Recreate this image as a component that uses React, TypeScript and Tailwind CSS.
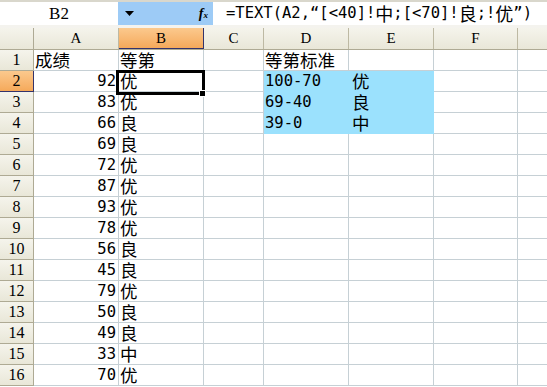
import React from 'react'

const grades = [
  [92, '优'], [83, '优'], [66, '良'], [69, '良'], [72, '优'], [87, '优'], [93, '优'], [78, '优'],
  [56, '良'], [45, '良'], [79, '优'], [50, '良'], [49, '良'], [33, '中'], [70, '优'],
] as const

const standard: Record<number, [string, string]> = {
  2: ['100-70', '优'],
  3: ['69-40', '良'],
  4: ['39-0', '中'],
}

const cjkFont = { fontFamily: '"Noto Sans CJK SC", "Noto Sans", sans-serif' }
const monoFont = { fontFamily: '"DejaVu Sans Mono", "Noto Sans CJK SC", monospace' }
const headFont = { fontFamily: '"Liberation Serif", "DejaVu Serif", serif' }

function ColHead({ label, w, active }: { label: string; w: string; active?: boolean }) {
  return (
    <div
      className={`${w} shrink-0 h-full flex items-center justify-center text-[15px] text-black border-r ${
        active
          ? 'bg-gradient-to-b from-[#fbc98d] to-[#f5a95a] border-[#34336b] border-b'
          : 'border-[#bdb9a3]'
      }`}
      style={headFont}
    >
      {label}
    </div>
  )
}

function Cell({
  w,
  children,
  align = 'left',
  fill,
  mono,
}: {
  w: string
  children?: React.ReactNode
  align?: 'left' | 'right'
  fill?: boolean
  mono?: boolean
}) {
  return (
    <div
      className={`${w} shrink-0 h-full flex items-end leading-[20px] text-black border-r border-b whitespace-nowrap ${
        mono ? 'text-[15.5px]' : 'text-[17.5px]'
      } ${align === 'right' ? 'justify-end pr-[2px]' : 'justify-start pl-[1px]'} ${
        fill ? 'bg-[#9be1fd] border-[#9be1fd]' : 'border-[#c6d0d5]'
      }`}
      style={mono ? monoFont : cjkFont}
    >
      {children}
    </div>
  )
}

const Cjk = ({ c }: { c: string }) => (
  <span className="text-[18px]" style={cjkFont}>
    {c}
  </span>
)

export default function App() {
  const rows = Array.from({ length: 16 }, (_, i) => i + 1)

  return (
    <div className="w-[547px] h-[387px] overflow-hidden bg-white select-none">
      {/* formula bar */}
      <div className="h-[25px] flex border-t-2 border-[#d9d7cc]">
        <div className="w-[118px] flex items-center justify-center text-[17px]" style={headFont}>
          B2
        </div>
        <div className="w-[95px] bg-[#9dcbf6] flex items-center justify-between pl-[7px] pr-[5px]">
          <svg width="9" height="5" viewBox="0 0 9 5">
            <path d="M0 0h9L4.5 5z" fill="#000" />
          </svg>
          <span className="italic font-bold text-[14px] leading-none" style={headFont}>
            f<span className="text-[9px]">x</span>
          </span>
        </div>
        <div className="flex-1 flex items-center pl-[13px] text-[15.5px] whitespace-nowrap" style={monoFont}>
          =TEXT(A2,“[&lt;40]!<Cjk c="中" />;[&lt;70]!<Cjk c="良" />;!<Cjk c="优" />”)
        </div>
      </div>
      <div className="h-[3px] bg-[#f4f3ee]" />

      <div className="relative">
        {/* column headers */}
        <div className="h-[22px] flex bg-gradient-to-b from-[#f5f4ec] to-[#e9e7d8] border-b border-[#aeaa94]">
          <div className="w-[34px] shrink-0 border-r border-[#aeaa94]" />
          <ColHead label="A" w="w-[85px]" />
          <ColHead label="B" w="w-[85px]" active />
          <ColHead label="C" w="w-[60px]" />
          <ColHead label="D" w="w-[85px]" />
          <ColHead label="E" w="w-[85px]" />
          <ColHead label="F" w="w-[84px]" />
          <ColHead label="" w="w-[40px]" />
        </div>

        {rows.map((r) => {
          const g = r >= 2 ? grades[r - 2] : null
          const s = standard[r]
          const active = r === 2
          return (
            <div key={r} className="h-[21px] flex">
              <div
                className={`w-[34px] shrink-0 h-full flex items-center justify-center text-[16px] border-r border-b ${
                  active
                    ? 'bg-gradient-to-b from-[#fbc98d] to-[#f5a95a] border-[#34336b]'
                    : 'bg-gradient-to-b from-[#f5f4ec] to-[#e9e7d8] border-[#aeaa94]'
                }`}
                style={headFont}
              >
                {r}
              </div>
              <Cell w="w-[85px]" align={r === 1 ? 'left' : 'right'} mono={r !== 1}>
                {r === 1 ? '成绩' : g?.[0]}
              </Cell>
              <Cell w="w-[85px]">{r === 1 ? '等第' : g?.[1]}</Cell>
              <Cell w="w-[60px]" />
              <Cell w="w-[85px]" fill={!!s} mono={!!s}>
                {r === 1 ? '等第标准' : s?.[0]}
              </Cell>
              <Cell w="w-[85px]" fill={!!s}>
                {s ? <span className="pl-[2px]">{s[1]}</span> : null}
              </Cell>
              <Cell w="w-[84px]" />
              <Cell w="w-[40px]" />
            </div>
          )
        })}

        {/* active cell B2 */}
        <div className="absolute left-[116px] top-[42px] w-[89px] h-[25px] border-[3px] border-black pointer-events-none" />
        <div className="absolute left-[199px] top-[62px] w-[7px] h-[7px] bg-black border border-white pointer-events-none" />
      </div>
    </div>
  )
}
